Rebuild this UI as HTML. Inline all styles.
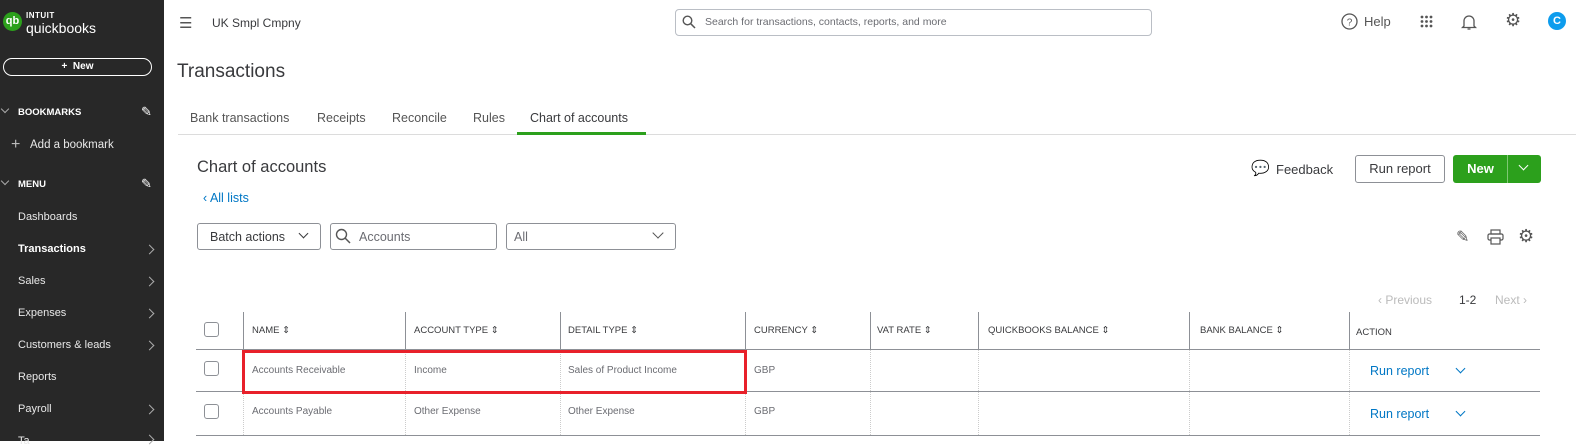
<!DOCTYPE html>
<html><head><meta charset="utf-8"><style>
*{box-sizing:border-box;margin:0;padding:0}
body{width:1576px;height:441px;overflow:hidden;background:#fff;font-family:"Liberation Sans",sans-serif;position:relative;color:#393a3d}
.a{position:absolute;white-space:nowrap}
#sb{position:absolute;left:0;top:0;width:164px;height:441px;background:#282828;color:#fff}
.sbi{position:absolute;left:18px;font-size:11px;color:#e8e8e8}
.chev{position:absolute;left:146px;width:7px;height:7px;border-right:1.3px solid #aaa;border-top:1.3px solid #aaa;transform:rotate(45deg)}
.th{position:absolute;top:312px;height:37px;font-size:9.5px;color:#393a3d;line-height:37px}
.vl{position:absolute;width:0;border-left:1px dotted #ccc}
.cb{position:absolute;left:204px;width:15px;height:15px;border:1px solid #8d9096;border-radius:3px}
.td{position:absolute;font-size:10px;color:#6b6c72}
.rr{position:absolute;left:1370px;font-size:12.5px;color:#0077c5}
</style></head><body>
<div id="sb">
 <div class="a" style="left:3px;top:12px;width:19px;height:19px;border-radius:50%;background:#2ca01c;color:#fff;font-size:11px;font-weight:bold;text-align:center;line-height:19px">qb</div>
 <div class="a" style="left:26px;top:11px;font-size:8px;font-weight:bold;letter-spacing:.5px">INTUIT</div>
 <div class="a" style="left:26px;top:20px;font-size:14px;">quickbooks</div>
 <div class="a" style="left:3px;top:58px;width:149px;height:18px;border:1.5px solid #fff;border-radius:9px;font-size:10px;font-weight:bold;text-align:center;line-height:15px">+&nbsp;&nbsp;New</div>
 <div class="a" style="left:2px;top:106px;width:6px;height:6px;border-left:1px solid #aaa;border-bottom:1px solid #aaa;transform:rotate(-45deg)"></div>
 <div class="a" style="left:18px;top:107px;font-size:9.5px;font-weight:bold">BOOKMARKS</div>
 <div class="a" style="left:141px;top:104px;font-size:13px">✎</div>
 <div class="a" style="left:11px;top:136px;font-size:16px;color:#bbb">+</div>
 <div class="a" style="left:30px;top:139px;font-size:11.5px;color:#e8e8e8">Add a bookmark</div>
 <div class="a" style="left:2px;top:178px;width:6px;height:6px;border-left:1px solid #aaa;border-bottom:1px solid #aaa;transform:rotate(-45deg)"></div>
 <div class="a" style="left:18px;top:179px;font-size:9.5px;font-weight:bold">MENU</div>
 <div class="a" style="left:141px;top:176px;font-size:13px">✎</div>
 <div class="sbi" style="top:211px">Dashboards</div>
 <div class="sbi" style="top:243px;color:#fff;font-weight:bold">Transactions</div><div class="chev" style="top:246px"></div>
 <div class="sbi" style="top:275px">Sales</div><div class="chev" style="top:278px"></div>
 <div class="sbi" style="top:307px">Expenses</div><div class="chev" style="top:310px"></div>
 <div class="sbi" style="top:339px">Customers &amp; leads</div><div class="chev" style="top:342px"></div>
 <div class="sbi" style="top:371px">Reports</div>
 <div class="sbi" style="top:403px">Payroll</div><div class="chev" style="top:406px"></div>
 <div class="sbi" style="top:435px">Ta</div><div class="chev" style="top:436px"></div>
</div>
<!-- top bar -->
<div class="a" style="left:179px;top:14px;font-size:15px;color:#555">☰</div>
<div class="a" style="left:212px;top:16px;font-size:12px;color:#393a3d">UK Smpl Cmpny</div>
<div class="a" style="left:675px;top:9px;width:477px;height:27px;border:1px solid #babec5;border-radius:4px"></div>
<svg class="a" style="left:682px;top:15px" width="14" height="14" viewBox="0 0 14 14"><circle cx="5.5" cy="5.5" r="4.3" fill="none" stroke="#555" stroke-width="1.4"/><path d="M8.7 8.7L13 13" stroke="#555" stroke-width="1.5"/></svg>
<div class="a" style="left:705px;top:16px;font-size:10.5px;color:#6b6c72">Search for transactions, contacts, reports, and more</div>
<svg class="a" style="left:1341px;top:13px" width="17" height="17"><circle cx="8.5" cy="8.5" r="7.5" fill="none" stroke="#555" stroke-width="1.3"/><text x="8.5" y="12.5" font-size="10" text-anchor="middle" fill="#555" font-family="Liberation Sans">?</text></svg>
<div class="a" style="left:1364px;top:14px;font-size:13px;color:#555">Help</div>
<svg class="a" style="left:1420px;top:15px" width="13" height="13"><g fill="#555"><circle cx="2" cy="2" r="1.4"/><circle cx="6.5" cy="2" r="1.4"/><circle cx="11" cy="2" r="1.4"/><circle cx="2" cy="6.5" r="1.4"/><circle cx="6.5" cy="6.5" r="1.4"/><circle cx="11" cy="6.5" r="1.4"/><circle cx="2" cy="11" r="1.4"/><circle cx="6.5" cy="11" r="1.4"/><circle cx="11" cy="11" r="1.4"/></g></svg>
<svg class="a" style="left:1461px;top:13px" width="16" height="18"><path d="M3 13V8a5 5 0 0 1 10 0v5l1.5 1.5h-13z" fill="none" stroke="#555" stroke-width="1.3"/><path d="M6.5 16h3" stroke="#555" stroke-width="1.3"/></svg>
<div class="a" style="left:1505px;top:10px;font-size:18px;color:#555">⚙</div>
<div class="a" style="left:1548px;top:12px;width:18px;height:18px;border-radius:50%;background:#0d9ced;color:#fff;font-size:11px;font-weight:bold;text-align:center;line-height:18px">C</div>
<!-- title -->
<div class="a" style="left:177px;top:61px;font-size:19px;color:#393a3d">Transactions</div>
<div class="a" style="left:190px;top:111px;font-size:12.5px;color:#555">Bank transactions</div>
<div class="a" style="left:317px;top:111px;font-size:12.5px;color:#555">Receipts</div>
<div class="a" style="left:392px;top:111px;font-size:12.5px;color:#555">Reconcile</div>
<div class="a" style="left:473px;top:111px;font-size:12.5px;color:#555">Rules</div>
<div class="a" style="left:530px;top:111px;font-size:12.5px;color:#393a3d">Chart of accounts</div>
<div class="a" style="left:178px;top:134px;width:1398px;height:1px;background:#dcdcdc"></div>
<div class="a" style="left:517px;top:132px;width:129px;height:3px;background:#2ca01c"></div>
<div class="a" style="left:197px;top:158px;font-size:16.5px;color:#393a3d">Chart of accounts</div>
<div class="a" style="left:203px;top:191px;font-size:12.5px;color:#0077c5">‹ All lists</div>
<div class="a" style="left:1251px;top:159px;font-size:15px;color:#555">💬</div>
<div class="a" style="left:1276px;top:162px;font-size:13px;color:#393a3d">Feedback</div>
<div class="a" style="left:1355px;top:155px;width:90px;height:28px;border:1px solid #8d9096;border-radius:3px;font-size:13px;text-align:center;line-height:26px">Run report</div>
<div class="a" style="left:1453px;top:155px;width:88px;height:28px;background:#2ca01c;border-radius:3px"></div>
<div class="a" style="left:1453px;top:155px;width:55px;height:28px;color:#fff;font-size:13px;font-weight:bold;text-align:center;line-height:28px">New</div>
<div class="a" style="left:1507px;top:155px;width:1px;height:28px;background:#7fc874"></div>
<div class="a" style="left:1520px;top:162px;width:7px;height:7px;border-right:1.5px solid #fff;border-bottom:1.5px solid #fff;transform:rotate(45deg)"></div>
<!-- filters -->
<div class="a" style="left:197px;top:223px;width:124px;height:27px;border:1px solid #8d9096;border-radius:3px"></div>
<div class="a" style="left:210px;top:230px;font-size:12.5px;color:#393a3d">Batch actions</div>
<div class="a" style="left:300px;top:230px;width:7px;height:7px;border-right:1.3px solid #393a3d;border-bottom:1.3px solid #393a3d;transform:rotate(45deg)"></div>
<div class="a" style="left:330px;top:223px;width:167px;height:27px;border:1px solid #8d9096;border-radius:3px"></div>
<svg class="a" style="left:335px;top:228px" width="16" height="16"><circle cx="6.5" cy="6.5" r="5" fill="none" stroke="#555" stroke-width="1.4"/><path d="M10 10l5 5" stroke="#555" stroke-width="1.5"/></svg>
<div class="a" style="left:359px;top:230px;font-size:12.5px;color:#6b6c72">Accounts</div>
<div class="a" style="left:506px;top:223px;width:170px;height:27px;border:1px solid #8d9096;border-radius:3px"></div>
<div class="a" style="left:514px;top:230px;font-size:12.5px;color:#6b6c72">All</div>
<div class="a" style="left:654px;top:229px;width:8px;height:8px;border-right:1.3px solid #555;border-bottom:1.3px solid #555;transform:rotate(45deg)"></div>
<div class="a" style="left:1456px;top:227px;font-size:16px;color:#555">✎</div>
<svg class="a" style="left:1487px;top:229px" width="17" height="16"><rect x="4" y="1" width="9" height="4" fill="none" stroke="#555" stroke-width="1.2"/><rect x="1" y="5" width="15" height="6" rx="1.5" fill="none" stroke="#555" stroke-width="1.2"/><rect x="4" y="9" width="9" height="6" fill="#fff" stroke="#555" stroke-width="1.2"/></svg>
<div class="a" style="left:1518px;top:226px;font-size:18px;color:#555">⚙</div>
<!-- pagination -->
<div class="a" style="left:1378px;top:293px;font-size:12px;color:#bbb">‹ Previous</div>
<div class="a" style="left:1459px;top:293px;font-size:12px;color:#393a3d">1-2</div>
<div class="a" style="left:1495px;top:293px;font-size:12px;color:#bbb">Next ›</div>
<!-- table -->
<div class="a" style="left:196px;top:349px;width:1344px;height:1px;background:#8d9096"></div>
<div class="a" style="left:196px;top:391px;width:1344px;height:1px;background:#8d9096"></div>
<div class="a" style="left:196px;top:435px;width:1344px;height:1px;background:#8d9096"></div>
<div class="vl" style="left:243px;top:312px;height:37px;border-left:1px solid #8d9096"></div>
<div class="vl" style="left:405px;top:312px;height:37px;border-left:1px solid #8d9096"></div>
<div class="vl" style="left:560px;top:312px;height:37px;border-left:1px solid #8d9096"></div>
<div class="vl" style="left:745px;top:312px;height:37px;border-left:1px solid #8d9096"></div>
<div class="vl" style="left:870px;top:312px;height:37px;border-left:1px solid #8d9096"></div>
<div class="vl" style="left:978px;top:312px;height:37px;border-left:1px solid #8d9096"></div>
<div class="vl" style="left:1189px;top:312px;height:37px;border-left:1px solid #8d9096"></div>
<div class="vl" style="left:1349px;top:312px;height:37px;border-left:1px solid #8d9096"></div>
<div class="vl" style="left:243px;top:350px;height:85px"></div>
<div class="vl" style="left:405px;top:350px;height:85px"></div>
<div class="vl" style="left:560px;top:350px;height:85px"></div>
<div class="vl" style="left:745px;top:350px;height:85px"></div>
<div class="vl" style="left:870px;top:350px;height:85px"></div>
<div class="vl" style="left:978px;top:350px;height:85px"></div>
<div class="vl" style="left:1189px;top:350px;height:85px"></div>
<div class="vl" style="left:1349px;top:350px;height:85px"></div>
<div class="cb" style="top:322px"></div><div class="cb" style="top:361px"></div><div class="cb" style="top:404px"></div>
<div class="th" style="left:252px">NAME ⇕</div>
<div class="th" style="left:414px">ACCOUNT TYPE ⇕</div>
<div class="th" style="left:568px">DETAIL TYPE ⇕</div>
<div class="th" style="left:754px">CURRENCY ⇕</div>
<div class="th" style="left:877px">VAT RATE ⇕</div>
<div class="th" style="left:988px">QUICKBOOKS BALANCE ⇕</div>
<div class="th" style="left:1200px">BANK BALANCE ⇕</div>
<div class="th" style="left:1356px;top:314px;line-height:37px">ACTION</div>
<div class="td" style="left:252px;top:365px">Accounts Receivable</div>
<div class="td" style="left:414px;top:365px">Income</div>
<div class="td" style="left:568px;top:365px">Sales of Product Income</div>
<div class="td" style="left:754px;top:365px">GBP</div>
<div class="td" style="left:252px;top:406px">Accounts Payable</div>
<div class="td" style="left:414px;top:406px">Other Expense</div>
<div class="td" style="left:568px;top:406px">Other Expense</div>
<div class="td" style="left:754px;top:406px">GBP</div>
<div class="rr" style="top:364px">Run report</div>
<div class="rr" style="top:407px">Run report</div>
<div class="a" style="left:1457px;top:365px;width:7px;height:7px;border-right:1.5px solid #0077c5;border-bottom:1.5px solid #0077c5;transform:rotate(45deg)"></div>
<div class="a" style="left:1457px;top:408px;width:7px;height:7px;border-right:1.5px solid #0077c5;border-bottom:1.5px solid #0077c5;transform:rotate(45deg)"></div>
<div class="a" style="left:242px;top:350px;width:505px;height:44px;border:3px solid #e8202a"></div>
</body></html>
